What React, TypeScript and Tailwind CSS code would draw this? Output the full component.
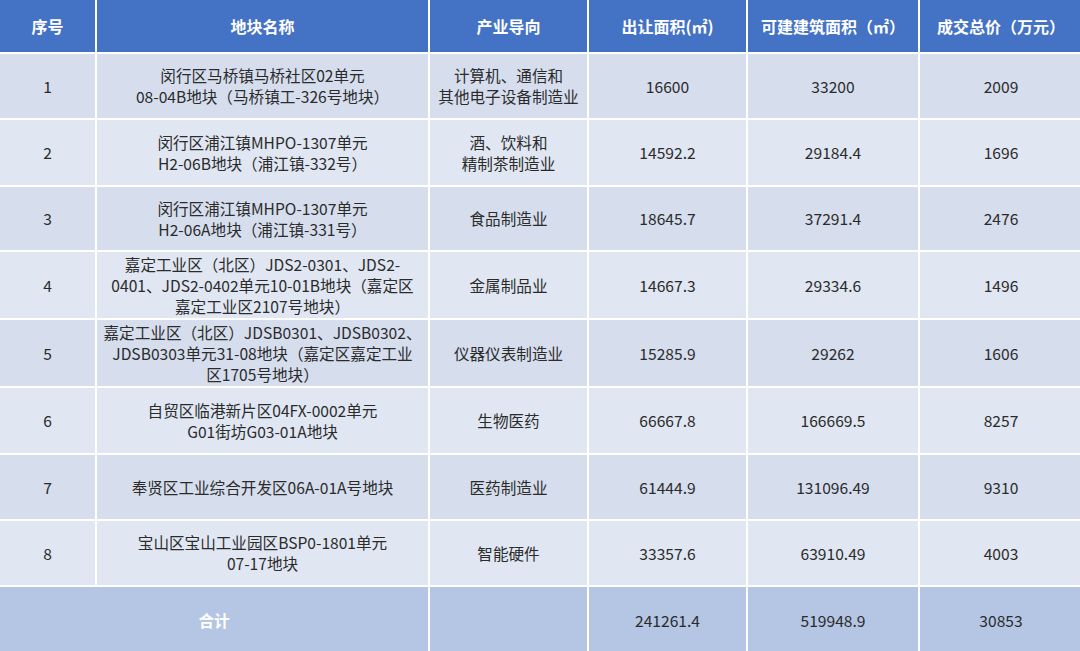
import React from "react";

type Row = {
  no: string;
  name: string[];
  industry: string[];
  area: string;
  build: string;
  price: string;
  h: string;
};

const rows: Row[] = [
  { no: "1", name: ["闵行区马桥镇马桥社区02单元", "08-04B地块（马桥镇工-326号地块）"], industry: ["计算机、通信和", "其他电子设备制造业"], area: "16600", build: "33200", price: "2009", h: "h-[66px]" },
  { no: "2", name: ["闵行区浦江镇MHPO-1307单元", "H2-06B地块（浦江镇-332号）"], industry: ["酒、饮料和", "精制茶制造业"], area: "14592.2", build: "29184.4", price: "1696", h: "h-[67px]" },
  { no: "3", name: ["闵行区浦江镇MHPO-1307单元", "H2-06A地块（浦江镇-331号）"], industry: ["食品制造业"], area: "18645.7", build: "37291.4", price: "2476", h: "h-[65px]" },
  { no: "4", name: ["嘉定工业区（北区）JDS2-0301、JDS2-", "0401、JDS2-0402单元10-01B地块（嘉定区", "嘉定工业区2107号地块）"], industry: ["金属制品业"], area: "14667.3", build: "29334.6", price: "1496", h: "h-[68px]" },
  { no: "5", name: ["嘉定工业区（北区）JDSB0301、JDSB0302、", "JDSB0303单元31-08地块（嘉定区嘉定工业", "区1705号地块）"], industry: ["仪器仪表制造业"], area: "15285.9", build: "29262", price: "1606", h: "h-[68px]" },
  { no: "6", name: ["自贸区临港新片区04FX-0002单元", "G01街坊G03-01A地块"], industry: ["生物医药"], area: "66667.8", build: "166669.5", price: "8257", h: "h-[67px]" },
  { no: "7", name: ["奉贤区工业综合开发区06A-01A号地块"], industry: ["医药制造业"], area: "61444.9", build: "131096.49", price: "9310", h: "h-[66px]" },
  { no: "8", name: ["宝山区宝山工业园区BSP0-1801单元", "07-17地块"], industry: ["智能硬件"], area: "33357.6", build: "63910.49", price: "4003", h: "h-[66px]" },
];

const headers = ["序号", "地块名称", "产业导向", "出让面积(㎡)", "可建建筑面积（㎡）", "成交总价（万元）"];

const cell = "border-2 border-white text-center align-middle px-1";

export default function App() {
  return (
    <div
      className="w-[1080px] h-[651px] overflow-hidden bg-white text-[15.6px] leading-[21px] text-[#2b2b2b]"
      style={{ fontFamily: '"Microsoft YaHei", "Noto Sans CJK SC", "Noto Sans", sans-serif' }}
    >
      <table className="w-[1084px] -ml-[2px] -mt-[2px] table-fixed border-collapse">
        <colgroup>
          <col className="w-[97px]" />
          <col className="w-[333px]" />
          <col className="w-[159px]" />
          <col className="w-[159px]" />
          <col className="w-[172px]" />
          <col className="w-[164px]" />
        </colgroup>
        <thead>
          <tr className="h-[54px] bg-[#4472c4]">
            {headers.map((h) => (
              <th key={h} className={`${cell} text-[16px] font-bold text-white whitespace-nowrap`}>
                {h}
              </th>
            ))}
          </tr>
        </thead>
        <tbody>
          {rows.map((r, i) => (
            <tr key={r.no} className={`${r.h} ${i % 2 === 0 ? "bg-[#d6deee]" : "bg-[#e0e7f2]"}`}>
              <td className={cell}>{r.no}</td>
              <td className={`${cell} whitespace-nowrap`}>
                {r.name.map((l) => (
                  <div key={l}>{l}</div>
                ))}
              </td>
              <td className={`${cell} whitespace-nowrap`}>
                {r.industry.map((l) => (
                  <div key={l}>{l}</div>
                ))}
              </td>
              <td className={cell}>{r.area}</td>
              <td className={cell}>{r.build}</td>
              <td className={cell}>{r.price}</td>
            </tr>
          ))}
          <tr className="h-[68px] bg-[#b4c6e4]">
            <td colSpan={2} className={`${cell} font-bold text-white`}>合计</td>
            <td className={cell}></td>
            <td className={cell}>241261.4</td>
            <td className={cell}>519948.9</td>
            <td className={cell}>30853</td>
          </tr>
        </tbody>
      </table>
    </div>
  );
}
